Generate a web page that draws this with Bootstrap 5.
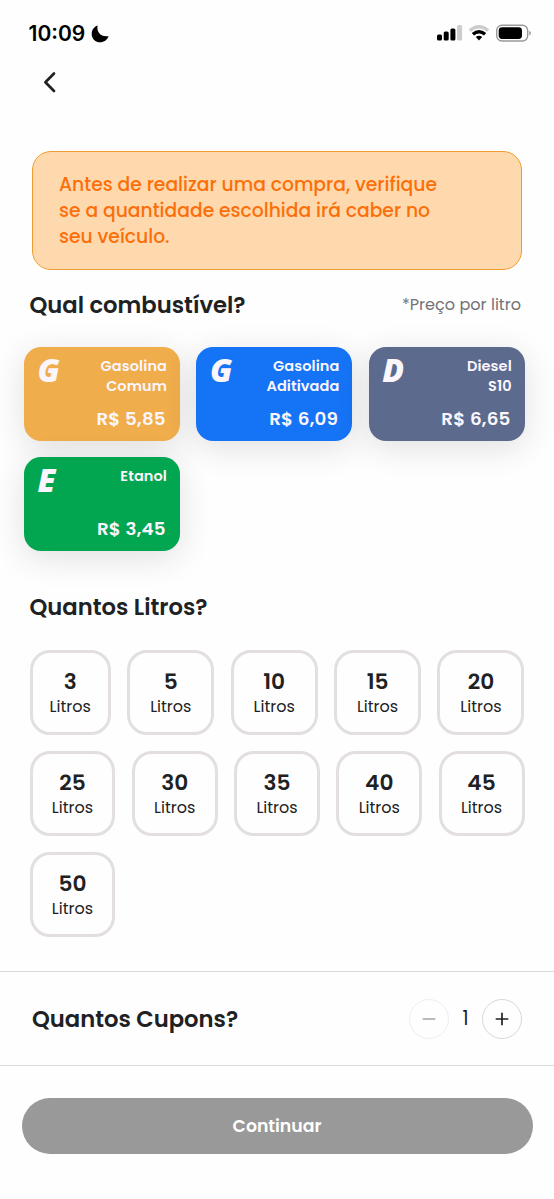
<!DOCTYPE html>
<html lang="pt-BR">
<head>
<meta charset="utf-8">
<meta name="viewport" content="width=device-width, initial-scale=1">
<title>Comprar combustível</title>
<link href="https://cdn.jsdelivr.net/npm/bootstrap@5.3.0/dist/css/bootstrap.min.css" rel="stylesheet">
<style>
body{font-family:Poppins,Inter,sans-serif;color:#202123;background:#fefefe;height:1199px;overflow:hidden}
.status{height:62px;padding:21px 23px 0 28.5px}
.clock{font:600 21px/25px Inter,sans-serif;color:#000}
.moon{margin-left:5px}
.topbar{height:88.5px;padding:7px 0 0 42px}
.notice{margin:0 32px;height:119px;padding:20px 26px;border:1.5px solid #ee9d2e;border-radius:19px;background:#ffd9ae;color:#fb6f0a;font-size:18.73px;font-weight:500;line-height:26px}
.notice span{display:block;white-space:nowrap}
.fuel-head{margin:21.5px 33px 0 29.5px}
.heading{font-size:22.7px;font-weight:600;line-height:28px;margin:0;white-space:nowrap}
.litres-head{margin:42.3px 29.5px 29.2px}
.per-litre{font-size:16.1px;color:#747476;line-height:28px}
.fuels{display:grid;grid-template-columns:repeat(3,156px);gap:16.4px;margin:28.3px 0 0 24px}
.fuel{height:93.5px;border-radius:17px;padding:8.6px 13px 9.5px 14px;color:#fbf5fc;box-shadow:0 7px 32px rgba(40,40,50,.14)}
.fuel-letter{font:italic 800 32px/32px "Open Sans",sans-serif;margin-top:-1.5px;margin-left:-.5px}
.fuel-name{font-size:14.5px;font-weight:600;line-height:20px;letter-spacing:.1px}
.fuel-price{font-size:18.3px;font-weight:600;line-height:24px;margin-right:1.2px;letter-spacing:.2px}
.fuel-gas{background:#f0ad4c}
.fuel-plus{background:#1573f5}
.fuel-diesel{background:#5c6b8d}
.fuel-ethanol{background:#03a650}
.litres{gap:16.3px}
.tiles{display:grid;gap:16.3px;margin:0 29.5px}
.tiles-a{grid-template-columns:81.5fr 87.2fr 87.2fr 87.2fr 87.2fr}
.tiles-b{grid-template-columns:repeat(5,1fr)}
.tile{height:84.8px;border:3px solid #e3dfdf;border-radius:20px;background:#fefefe;padding-top:1px}
.tile b{font-size:21.7px;font-weight:600;line-height:26px;margin-bottom:2px}
.tile span{font-size:16px;line-height:20px}
.coupons{margin-top:34px;height:95px;border-top:1px solid #dadada;border-bottom:1px solid #dadada;padding:0 32px}
.step{width:40px;height:40px;border:1.5px solid #d8d8d8;border-radius:50%;background:none;padding:0}
.step:disabled{border-color:#eee}
.stepper{margin-top:1px}
.count{width:33px;text-align:center;font-size:19px;line-height:24px}
.go{margin:31.6px 21.5px 0;height:56.5px;border-radius:28.25px;background:#999;color:#fff;font-size:17.3px;font-weight:600;border:0;padding-top:2px}
</style>
</head>
<body>
<header>
  <div class="status d-flex justify-content-between align-items-start">
    <div class="d-flex align-items-center">
      <span class="clock">10:09</span>
      <svg class="moon" width="20" height="20" viewBox="0 0 20 20"><path d="M7.600 1.600C6.300 8.200 10.800 13.400 18.600 12.200C17.200 16 14 18.200 10.200 18.200C5.400 18.200 1.700 14.500 1.700 9.900C1.700 6.100 4 2.900 7.600 1.600Z" fill="#000"/></svg>
    </div>
    <svg width="96" height="24" viewBox="0 0 96 24">
      <g fill="#000"><rect x="2" y="13.500" width="5" height="6" rx="1.500"/><rect x="8.700" y="10.500" width="5" height="9" rx="1.500"/><rect x="15.400" y="7.500" width="5" height="12" rx="1.500"/><rect x="22.100" y="4" width="5" height="15.500" rx="1.500" fill="#cdcdcd"/></g>
      <g fill="none" stroke-width="3.400"><path d="M34.800 9.500Q44 1.800 53.200 9.500" stroke="#cdcdcd"/><path d="M37.900 13.300Q44 8.200 50.100 13.300" stroke="#000"/></g>
      <path d="M40.800 16.100Q44 13.600 47.200 16.100L44 19.600Z"/>
      <rect x="61.700" y="4.200" width="31" height="15.800" rx="5.200" fill="none" stroke="#999" stroke-width="1.400"/>
      <rect x="63.700" y="6.200" width="23.300" height="11.800" rx="3.400"/>
      <path d="M94.300 9.700Q96 10.300 96 12.100T94.300 14.500Z" fill="#999"/>
    </svg>
  </div>
  <nav class="topbar"><svg width="16" height="22" viewBox="0 0 16 22"><path d="M12 2.500L3.400 11.200L12 20" fill="none" stroke="#202123" stroke-width="2.700" stroke-linecap="round" stroke-linejoin="round"/></svg></nav>
</header>
<main>
  <div class="notice"><span>Antes de realizar uma compra, verifique</span><span>se a quantidade escolhida irá caber no</span><span>seu veículo.</span></div>

  <div class="fuel-head d-flex justify-content-between">
    <h2 class="heading">Qual combustível?</h2><span class="per-litre">*Preço por litro</span>
  </div>

  <section class="fuels">
    <div class="fuel fuel-gas d-flex justify-content-between"><div class="fuel-letter">G</div><div class="d-flex flex-column justify-content-between text-end"><div class="fuel-name">Gasolina<br>Comum</div><div class="fuel-price">R$ 5,85</div></div></div>
    <div class="fuel fuel-plus d-flex justify-content-between"><div class="fuel-letter">G</div><div class="d-flex flex-column justify-content-between text-end"><div class="fuel-name">Gasolina<br>Aditivada</div><div class="fuel-price">R$ 6,09</div></div></div>
    <div class="fuel fuel-diesel d-flex justify-content-between"><div class="fuel-letter">D</div><div class="d-flex flex-column justify-content-between text-end"><div class="fuel-name">Diesel<br>S10</div><div class="fuel-price">R$ 6,65</div></div></div>
    <div class="fuel fuel-ethanol d-flex justify-content-between"><div class="fuel-letter">E</div><div class="d-flex flex-column justify-content-between text-end"><div class="fuel-name">Etanol</div><div class="fuel-price">R$ 3,45</div></div></div>
  </section>

  <h2 class="heading litres-head">Quantos Litros?</h2>
  <section class="litres d-flex flex-column">
    <div class="tiles tiles-a" data-litres="3,5,10,15,20"></div>
    <div class="tiles tiles-b" data-litres="25,30,35,40,45"></div>
    <div class="tiles tiles-b" data-litres="50"></div>
  </section>

  <section class="coupons d-flex align-items-center justify-content-between">
    <h2 class="heading">Quantos Cupons?</h2>
    <div class="stepper d-flex align-items-center">
      <button class="step d-flex align-items-center justify-content-center" disabled aria-label="Menos"><svg width="14" height="14" viewBox="0 0 14 14"><path d="M.7 7H13.300" stroke="#ababab" stroke-width="1.600"/></svg></button>
      <span class="count">1</span>
      <button class="step d-flex align-items-center justify-content-center" aria-label="Mais"><svg width="14" height="14" viewBox="0 0 14 14"><path d="M.7 7H13.300M7 .7V13.300" stroke="#202123" stroke-width="1.700"/></svg></button>
    </div>
  </section>
  <div class="d-grid"><button class="go">Continuar</button></div>
</main>
<script>
document.querySelectorAll('[data-litres]').forEach(function(row){
  row.innerHTML=row.dataset.litres.split(',').map(function(n){
    return '<div class="tile d-flex flex-column align-items-center justify-content-center"><b>'+n+'</b><span>Litros</span></div>';
  }).join('');
});
</script>
<script src="https://cdn.jsdelivr.net/npm/bootstrap@5.3.0/dist/js/bootstrap.bundle.min.js"></script>
</body>
</html>
